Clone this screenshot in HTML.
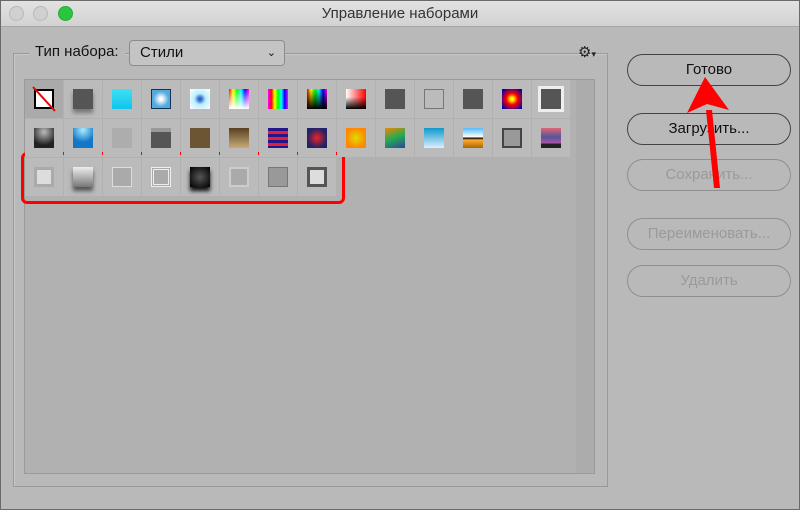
<!DOCTYPE html>
<html><head><meta charset="utf-8"><style>
body{margin:0;width:800px;height:510px;overflow:hidden;font-family:"Liberation Sans","DejaVu Sans",sans-serif;}
.win{position:absolute;left:0;top:0;width:798px;height:508px;border:1px solid #6a6a6a;background:#b9b9b9;}
.tb{position:absolute;left:0;top:0;width:798px;height:25px;background:linear-gradient(#e2e2e2,#d2d2d2);border-bottom:1px solid #a6a6a6;}
.tb .t{position:absolute;left:0;right:0;top:4px;text-align:center;font-size:15px;color:#333;}
.dot{position:absolute;top:5px;width:13px;height:13px;border-radius:50%;background:#d0d0d0;border:1px solid #b8b8b8;}
.grp{position:absolute;left:12px;top:52px;width:593px;height:432px;border:1px solid #999;box-shadow:inset 1px 1px 0 #c8c8c8;}
.list{position:absolute;left:23px;top:78px;width:569px;height:393px;background:#b1b1b1;border:1px solid #9a9a9a;}
.sb{position:absolute;left:551px;top:0;width:18px;height:393px;background:#acacac;}
.lbl{position:absolute;left:28px;top:42px;background:#b9b9b9;padding:0 6px;font-size:15px;color:#111;}
.dd{position:absolute;left:128px;top:39px;width:154px;height:24px;border:1px solid #8c8c8c;border-radius:4px;background:#c4c4c4;font-size:15px;line-height:24px;text-indent:10px;color:#111;}
.dd span{position:absolute;right:8px;top:0;font-size:11px;}
.tile{position:absolute;width:38px;height:38px;background:#bbbbbb;}
.ic{position:absolute;left:9px;top:9px;width:20px;height:20px;}
.btn{position:absolute;left:626px;width:162px;height:30px;border:1px solid #8f8f8f;border-radius:16px;font-size:15px;text-align:center;line-height:30px;color:#9a9a9a;}
.btn.on{border-color:#444;color:#111;}
.red{position:absolute;left:21px;top:152px;width:318px;height:46px;border:3px solid #f00;border-radius:6px;}
</style></head><body>
<div class="win">
<div class="tb"><div class="dot" style="left:8px"></div><div class="dot" style="left:32px"></div><div class="dot" style="left:57px;background:#2dc43f;border-color:#27a935"></div><div class="t">Управление наборами</div></div>
<div class="grp"></div>
<div class="lbl">Тип набора:</div>
<div class="dd">Стили<span>&#8964;</span></div>
<div style="position:absolute;left:577px;top:42px;font-size:15px;color:#222">&#9881;<span style="font-size:9px">▾</span></div>
<div class="list"><div class="sb"></div></div>
<div id="tiles"></div>
<div class="btn on" style="top:53px">Готово</div>
<div class="btn on" style="top:112px">Загрузить...</div>
<div class="btn" style="top:158px">Сохранить...</div>
<div class="btn" style="top:217px">Переименовать...</div>
<div class="btn" style="top:264px">Удалить</div>
</div>
<div class="red"></div>
<svg style="position:absolute;left:0;top:0" width="800" height="510"><path d="M712 110 L706 110 L714 188 L720 188 Z" fill="#f00"/><path d="M705 77 L687 113 L707 104 L729 110 Z" fill="#f00"/></svg>
<div style="position:absolute;left:0;top:0">
<!-- row1 -->
<div class="tile" style="left:25px;top:80px;background:#aaa"><div class="ic" style="background:#fff;border:2px solid #000;width:16px;height:16px"></div><svg style="position:absolute;left:0;top:0" width="38" height="38"><line x1="8" y1="7" x2="30" y2="31" stroke="#e00" stroke-width="2"/></svg></div>
<div class="tile" style="left:64px;top:80px"><div class="ic" style="background:#555;box-shadow:0 4px 4px #777"></div></div>
<div class="tile" style="left:103px;top:80px"><div class="ic" style="background:linear-gradient(#3de0f5,#10c4ec)"></div></div>
<div class="tile" style="left:142px;top:80px"><div class="ic" style="background:radial-gradient(#fff 10%,#5ad 60%);border:1px solid #135;width:18px;height:18px"></div></div>
<div class="tile" style="left:181px;top:80px"><div class="ic" style="background:radial-gradient(#36c 10%,#bef 40%,#fff)"></div></div>
<div class="tile" style="left:220px;top:80px"><div class="ic" style="background:linear-gradient(transparent,#fff),linear-gradient(90deg,red,#ff0,#0f0,#0ff,#00f,#f0f)"></div></div>
<div class="tile" style="left:259px;top:80px"><div class="ic" style="background:linear-gradient(90deg,#f0f,red,#ff0,#0f0,#0ff,#00f,#f0f)"></div></div>
<div class="tile" style="left:298px;top:80px"><div class="ic" style="background:linear-gradient(transparent,#000),linear-gradient(90deg,red,#ff0,#0f0,#0ff,#00f,#f0f)"></div></div>
<div class="tile" style="left:337px;top:80px"><div class="ic" style="background:linear-gradient(transparent 40%,#000),linear-gradient(90deg,#fff,red)"></div></div>
<div class="tile" style="left:376px;top:80px"><div class="ic" style="background:#555"></div></div>
<div class="tile" style="left:415px;top:80px"><div class="ic" style="background:#bbb;border:1px solid #777;width:18px;height:18px"></div></div>
<div class="tile" style="left:454px;top:80px"><div class="ic" style="background:#555"></div></div>
<div class="tile" style="left:493px;top:80px"><div class="ic" style="background:radial-gradient(#ff0 10%,red 40%,#00a 90%)"></div></div>
<div class="tile" style="left:532px;top:80px"><div class="ic" style="background:#555;border:3px solid #eee;left:6px;top:6px"></div></div>
<!-- row2 -->
<div class="tile" style="left:25px;top:119px"><div class="ic" style="background:radial-gradient(circle at 50% 20%,#bbb,#222 70%)"></div></div>
<div class="tile" style="left:64px;top:119px"><div class="ic" style="background:radial-gradient(circle at 50% 10%,#aef,#1277c8 60%)"></div></div>
<div class="tile" style="left:103px;top:119px"><div class="ic" style="background:#adadad"></div></div>
<div class="tile" style="left:142px;top:119px"><div class="ic" style="background:#555;border-top:4px solid #999;height:16px"></div></div>
<div class="tile" style="left:181px;top:119px"><div class="ic" style="background:#6b5533"></div></div>
<div class="tile" style="left:220px;top:119px"><div class="ic" style="background:linear-gradient(#5a4020,#c8aa78)"></div></div>
<div class="tile" style="left:259px;top:119px"><div class="ic" style="background:repeating-linear-gradient(#22168a 0 3px,#e0203a 3px 6px)"></div></div>
<div class="tile" style="left:298px;top:119px"><div class="ic" style="background:radial-gradient(#e22,#226 70%)"></div></div>
<div class="tile" style="left:337px;top:119px"><div class="ic" style="background:radial-gradient(#dd0,#f80 70%)"></div></div>
<div class="tile" style="left:376px;top:119px"><div class="ic" style="background:linear-gradient(160deg,#e80,#2a5,#349)"></div></div>
<div class="tile" style="left:415px;top:119px"><div class="ic" style="background:linear-gradient(#19c,#def)"></div></div>
<div class="tile" style="left:454px;top:119px"><div class="ic" style="background:linear-gradient(#5bf,#fff 45%,#000 50%,#fa3 60%,#a60)"></div></div>
<div class="tile" style="left:493px;top:119px"><div class="ic" style="background:#999;border:2px solid #444;width:16px;height:16px"></div></div>
<div class="tile" style="left:532px;top:119px"><div class="ic" style="background:linear-gradient(#d67,#559 45%,#a5a 75%,#222 80%)"></div></div>
<!-- row3 -->
<div class="tile" style="left:25px;top:158px"><div class="ic" style="background:#ddd;border:3px solid #aaa;width:14px;height:14px"></div></div>
<div class="tile" style="left:64px;top:158px"><div class="ic" style="background:linear-gradient(#eee,#777);box-shadow:0 4px 4px #555"></div></div>
<div class="tile" style="left:103px;top:158px"><div class="ic" style="background:#aaa;border:1px solid #ddd;width:18px;height:18px"></div></div>
<div class="tile" style="left:142px;top:158px"><div class="ic" style="background:#aaa;border:3px double #eee;width:14px;height:14px"></div></div>
<div class="tile" style="left:181px;top:158px"><div class="ic" style="background:radial-gradient(#555,#000);box-shadow:0 4px 4px #111"></div></div>
<div class="tile" style="left:220px;top:158px"><div class="ic" style="background:#aaa;border:2px solid #ccc;width:16px;height:16px"></div></div>
<div class="tile" style="left:259px;top:158px"><div class="ic" style="background:#999;border:1px solid #777;width:18px;height:18px"></div></div>
<div class="tile" style="left:298px;top:158px"><div class="ic" style="background:#ddd;border:3px solid #555;width:14px;height:14px"></div></div>
</div>
</body></html>
